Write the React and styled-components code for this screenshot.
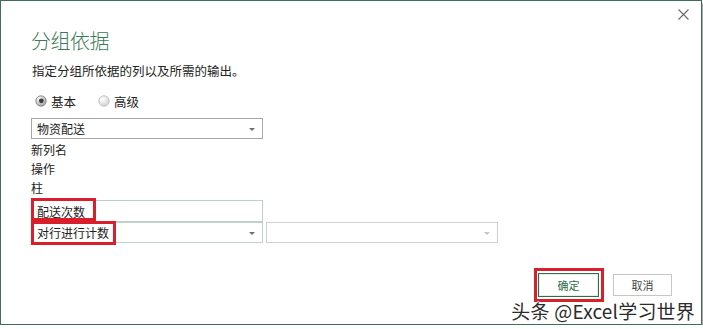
import React from 'react';
import styled, { createGlobalStyle } from 'styled-components';

const GlobalStyle = createGlobalStyle`
  html, body {
    margin: 0;
    padding: 0;
    background: #ffffff;
  }
  body {
    font-family: "Noto Sans CJK SC", "Noto Sans", sans-serif;
    color: #222;
  }
`;

const Dialog = styled.div`
  position: relative;
  box-sizing: border-box;
  width: 702px;
  height: 325px;
  border: 1px solid #3f6f57;
  background: #fff;
  box-shadow: 1px 3px 2px rgba(80, 80, 80, 0.75);
  padding: 28px 0 0 30px;
  display: flex;
  flex-direction: column;
`;

const Close = styled.button`
  position: absolute;
  top: 7px;
  right: 11px;
  width: 13px;
  height: 13px;
  padding: 0;
  border: 0;
  background: transparent;
  display: flex;
`;

const Title = styled.h1`
  margin: 0;
  font-size: 20px;
  line-height: 24px;
  font-weight: 300;
  color: #3c7a58;
  letter-spacing: -0.5px;
`;

const Intro = styled.p`
  margin: 9px 0 0 1px;
  font-size: 12.5px;
  line-height: 18px;
  color: #222;
`;

const RadioRow = styled.div`
  display: flex;
  align-items: center;
  gap: 22px;
  margin: 12px 0 0 4px;
  height: 18px;
`;

const Radio = styled.label`
  display: flex;
  align-items: center;
  gap: 4px;
  font-size: 12.5px;
  color: #222;
`;

const Select = styled.div`
  position: relative;
  box-sizing: border-box;
  width: ${(p) => p.$w || 232}px;
  height: 21px;
  border: 1px solid ${(p) => p.$border || '#a6a6a6'};
  display: flex;
  align-items: center;
  justify-content: space-between;
  padding: 0 7px 0 5px;
  font-size: 12px;
  color: #222;
  background: #fff;
`;

const Caret = styled.span`
  width: 0;
  height: 0;
  border-left: 3px solid transparent;
  border-right: 3px solid transparent;
  border-top: 3px solid ${(p) => (p.$dim ? '#c4c4c4' : '#6e6e6e')};
  margin-top: 1px;
`;

const Label = styled.div`
  font-size: 12px;
  line-height: 19px;
  color: #222;
`;

const Labels = styled.div`
  margin-top: 1px;
  display: flex;
  flex-direction: column;
`;

const Input = styled.div`
  position: relative;
  box-sizing: border-box;
  width: 232px;
  height: 22px;
  border: 1px solid #bcd0c8;
  margin-top: 3px;
  display: flex;
  align-items: center;
  padding-left: 5px;
  font-size: 12px;
`;

const Row = styled.div`
  display: flex;
  gap: 3px;
`;

const Mark = styled.span`
  position: absolute;
  left: ${(p) => p.$l}px;
  top: ${(p) => p.$t}px;
  width: ${(p) => p.$w}px;
  height: ${(p) => p.$h}px;
  box-sizing: border-box;
  border: 3px solid #d7202b;
  pointer-events: none;
`;

const Footer = styled.div`
  display: flex;
  justify-content: flex-end;
  gap: 14px;
  margin-top: 30px;
  padding-right: 29px;
`;

const Button = styled.button`
  position: relative;
  box-sizing: border-box;
  width: ${(p) => (p.$primary ? 61 : 59)}px;
  height: ${(p) => (p.$primary ? 24 : 22)}px;
  margin-top: ${(p) => (p.$primary ? 0 : 1)}px;
  border: 1px solid ${(p) => (p.$primary ? '#2f6e4c' : '#c6c6c6')};
  box-shadow: ${(p) => (p.$primary ? 'inset 0 0 0 1px #e4efe9' : 'none')};
  background: #fff;
  font-family: "Noto Sans CJK SC", sans-serif;
  font-size: 11px;
  color: ${(p) => (p.$primary ? '#2f6e4c' : '#444')};
  padding: 0;
`;

const Watermark = styled.div`
  position: absolute;
  right: 6px;
  bottom: 1px;
  font-size: 19px;
  line-height: 24px;
  letter-spacing: 0.2px;
  color: #2c2c2c;
  font-family: "Noto Sans CJK SC", "Liberation Sans", sans-serif;
  text-shadow: 1px 0 #fff, -1px 0 #fff, 0 1px #fff, 0 -1px #fff;
  white-space: nowrap;
`;

const RadioIcon = ({ checked }) => (
  <svg width="12" height="12" viewBox="0 0 12 12">
    <defs>
      <radialGradient id={checked ? 'rgOn' : 'rgOff'} cx="0.35" cy="0.3" r="0.8">
        <stop offset="0" stopColor="#ffffff" />
        <stop offset="1" stopColor={checked ? '#9a9a9a' : '#cfcfcf'} />
      </radialGradient>
    </defs>
    <circle cx="6" cy="6" r="5.2" fill={`url(#${checked ? 'rgOn' : 'rgOff'})`} stroke={checked ? '#7a7a7a' : '#b8b8b8'} strokeWidth="0.8" />
    {checked && <circle cx="6.3" cy="5.8" r="2.4" fill="#3a3f48" />}
  </svg>
);

export default function App() {
  return (
    <>
      <GlobalStyle />
      <Dialog>
        <Close aria-label="关闭">
          <svg width="13" height="13" viewBox="0 0 13 13">
            <path d="M1.5 1.5 L11.5 11.5 M11.5 1.5 L1.5 11.5" stroke="#6a6a6a" strokeWidth="1.1" fill="none" />
          </svg>
        </Close>
        <Title>分组依据</Title>
        <Intro>指定分组所依据的列以及所需的输出。</Intro>
        <RadioRow>
          <Radio>
            <RadioIcon checked />
            基本
          </Radio>
          <Radio>
            <RadioIcon />
            高级
          </Radio>
        </RadioRow>
        <Select style={{ marginTop: 8 }}>
          物资配送
          <Caret />
        </Select>
        <Labels>
          <Label>新列名</Label>
          <Label>操作</Label>
          <Label>柱</Label>
        </Labels>
        <Input>
          配送次数
          <Mark $l={-1} $t={-3} $w={65} $h={23} />
        </Input>
        <Row>
          <Select $border="#c2d2cc">
            对行进行计数
            <Caret />
            <Mark $l={-1} $t={-2} $w={85} $h={24} />
          </Select>
          <Select $border="#cfcfcf">
            <span />
            <Caret $dim />
          </Select>
        </Row>
        <Footer>
          <Button $primary>
            确定
            <Mark $l={-5} $t={-6} $w={70} $h={34} />
          </Button>
          <Button>取消</Button>
        </Footer>
        <Watermark>头条 @Excel学习世界</Watermark>
      </Dialog>
    </>
  );
}
